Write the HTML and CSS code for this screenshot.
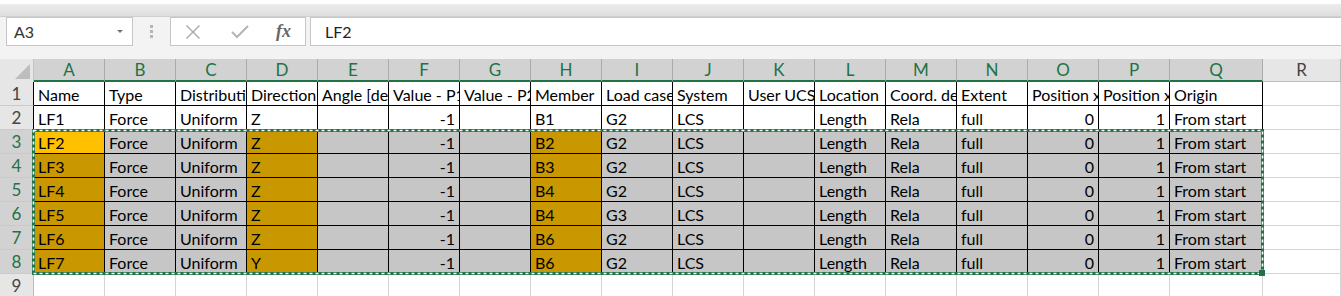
FILE: index.html
```html
<!DOCTYPE html>
<html>
  <head>
    <title>Load table</title>
    <link rel="stylesheet" href="styles.css">
  </head>
  <body>
    <div class="top-strip"></div>
    <div class="ribbon-edge"></div>

    <div class="formula-bar">
      <div class="name-box">
        <span>A3</span>
        <span class="caret"></span>
      </div>
      <div class="grip"><span></span><span></span><span></span></div>
      <div class="fx-buttons">
        <svg width="16" height="16" viewBox="0 0 16 16">
          <path d="M1.5 1.5 L14.5 14.5 M14.5 1.5 L1.5 14.5" stroke="#a8a8a8" stroke-width="1.4" fill="none"/>
        </svg>
        <svg width="18" height="14" viewBox="0 0 18 14">
          <path d="M1 7 L6 12 L17 1" stroke="#b4b4b4" stroke-width="2" fill="none"/>
        </svg>
        <span class="fx">fx</span>
      </div>
      <div class="formula-input">LF2</div>
    </div>

    <div class="sheet">
      <div class="row head">
        <div class="corner"><span class="tri"></span></div>
        <div class="col sel">A</div>
        <div class="col sel">B</div>
        <div class="col sel">C</div>
        <div class="col sel">D</div>
        <div class="col sel">E</div>
        <div class="col sel">F</div>
        <div class="col sel">G</div>
        <div class="col sel">H</div>
        <div class="col sel">I</div>
        <div class="col sel">J</div>
        <div class="col sel">K</div>
        <div class="col sel">L</div>
        <div class="col sel">M</div>
        <div class="col sel">N</div>
        <div class="col sel">O</div>
        <div class="col sel">P</div>
        <div class="col sel">Q</div>
        <div class="col">R</div>
      </div>

      <div class="row">
        <div class="rh data">1</div>
        <div class="c d">Name</div>
        <div class="c d">Type</div>
        <div class="c d">Distribution</div>
        <div class="c d">Direction</div>
        <div class="c d">Angle [deg]</div>
        <div class="c d">Value - P1</div>
        <div class="c d">Value - P2</div>
        <div class="c d">Member</div>
        <div class="c d">Load case</div>
        <div class="c d">System</div>
        <div class="c d">User UCS</div>
        <div class="c d">Location</div>
        <div class="c d">Coord. definition</div>
        <div class="c d">Extent</div>
        <div class="c d">Position x1</div>
        <div class="c d">Position x2</div>
        <div class="c d">Origin</div>
        <div class="c"></div>
      </div>

      <div class="row">
        <div class="rh data">2</div>
        <div class="c d">LF1</div>
        <div class="c d">Force</div>
        <div class="c d">Uniform</div>
        <div class="c d">Z</div>
        <div class="c d"></div>
        <div class="c d num">-1</div>
        <div class="c d"></div>
        <div class="c d">B1</div>
        <div class="c d">G2</div>
        <div class="c d">LCS</div>
        <div class="c d"></div>
        <div class="c d">Length</div>
        <div class="c d">Rela</div>
        <div class="c d">full</div>
        <div class="c d num">0</div>
        <div class="c d num">1</div>
        <div class="c d">From start</div>
        <div class="c"></div>
      </div>

      <div class="row">
        <div class="rh data picked">3</div>
        <div class="c d active">LF2</div>
        <div class="c d gray">Force</div>
        <div class="c d gray">Uniform</div>
        <div class="c d amber">Z</div>
        <div class="c d gray"></div>
        <div class="c d gray num">-1</div>
        <div class="c d gray"></div>
        <div class="c d amber">B2</div>
        <div class="c d gray">G2</div>
        <div class="c d gray">LCS</div>
        <div class="c d gray"></div>
        <div class="c d gray">Length</div>
        <div class="c d gray">Rela</div>
        <div class="c d gray">full</div>
        <div class="c d gray num">0</div>
        <div class="c d gray num">1</div>
        <div class="c d gray">From start</div>
        <div class="c"></div>
      </div>

      <div class="row">
        <div class="rh data picked">4</div>
        <div class="c d amber">LF3</div>
        <div class="c d gray">Force</div>
        <div class="c d gray">Uniform</div>
        <div class="c d amber">Z</div>
        <div class="c d gray"></div>
        <div class="c d gray num">-1</div>
        <div class="c d gray"></div>
        <div class="c d amber">B3</div>
        <div class="c d gray">G2</div>
        <div class="c d gray">LCS</div>
        <div class="c d gray"></div>
        <div class="c d gray">Length</div>
        <div class="c d gray">Rela</div>
        <div class="c d gray">full</div>
        <div class="c d gray num">0</div>
        <div class="c d gray num">1</div>
        <div class="c d gray">From start</div>
        <div class="c"></div>
      </div>

      <div class="row">
        <div class="rh data picked">5</div>
        <div class="c d amber">LF4</div>
        <div class="c d gray">Force</div>
        <div class="c d gray">Uniform</div>
        <div class="c d amber">Z</div>
        <div class="c d gray"></div>
        <div class="c d gray num">-1</div>
        <div class="c d gray"></div>
        <div class="c d amber">B4</div>
        <div class="c d gray">G2</div>
        <div class="c d gray">LCS</div>
        <div class="c d gray"></div>
        <div class="c d gray">Length</div>
        <div class="c d gray">Rela</div>
        <div class="c d gray">full</div>
        <div class="c d gray num">0</div>
        <div class="c d gray num">1</div>
        <div class="c d gray">From start</div>
        <div class="c"></div>
      </div>

      <div class="row">
        <div class="rh data picked">6</div>
        <div class="c d amber">LF5</div>
        <div class="c d gray">Force</div>
        <div class="c d gray">Uniform</div>
        <div class="c d amber">Z</div>
        <div class="c d gray"></div>
        <div class="c d gray num">-1</div>
        <div class="c d gray"></div>
        <div class="c d amber">B4</div>
        <div class="c d gray">G3</div>
        <div class="c d gray">LCS</div>
        <div class="c d gray"></div>
        <div class="c d gray">Length</div>
        <div class="c d gray">Rela</div>
        <div class="c d gray">full</div>
        <div class="c d gray num">0</div>
        <div class="c d gray num">1</div>
        <div class="c d gray">From start</div>
        <div class="c"></div>
      </div>

      <div class="row">
        <div class="rh data picked">7</div>
        <div class="c d amber">LF6</div>
        <div class="c d gray">Force</div>
        <div class="c d gray">Uniform</div>
        <div class="c d amber">Z</div>
        <div class="c d gray"></div>
        <div class="c d gray num">-1</div>
        <div class="c d gray"></div>
        <div class="c d amber">B6</div>
        <div class="c d gray">G2</div>
        <div class="c d gray">LCS</div>
        <div class="c d gray"></div>
        <div class="c d gray">Length</div>
        <div class="c d gray">Rela</div>
        <div class="c d gray">full</div>
        <div class="c d gray num">0</div>
        <div class="c d gray num">1</div>
        <div class="c d gray">From start</div>
        <div class="c"></div>
      </div>

      <div class="row">
        <div class="rh data picked">8</div>
        <div class="c d amber">LF7</div>
        <div class="c d gray">Force</div>
        <div class="c d gray">Uniform</div>
        <div class="c d amber">Y</div>
        <div class="c d gray"></div>
        <div class="c d gray num">-1</div>
        <div class="c d gray"></div>
        <div class="c d amber">B6</div>
        <div class="c d gray">G2</div>
        <div class="c d gray">LCS</div>
        <div class="c d gray"></div>
        <div class="c d gray">Length</div>
        <div class="c d gray">Rela</div>
        <div class="c d gray">full</div>
        <div class="c d gray num">0</div>
        <div class="c d gray num">1</div>
        <div class="c d gray">From start</div>
        <div class="c"></div>
      </div>

      <div class="row">
        <div class="rh">9</div>
        <div class="c"></div><div class="c"></div><div class="c"></div>
        <div class="c"></div><div class="c"></div><div class="c"></div>
        <div class="c"></div><div class="c"></div><div class="c"></div>
        <div class="c"></div><div class="c"></div><div class="c"></div>
        <div class="c"></div><div class="c"></div><div class="c"></div>
        <div class="c"></div><div class="c"></div><div class="c"></div>
      </div>

      <!-- copy marquee round A3:Q8 -->
      <svg class="ants" width="1240" height="152">
        <rect x="1.5" y="1.5" width="1229" height="143" fill="none" stroke="#217346" stroke-width="3"/>
        <rect x="1.5" y="1.5" width="1229" height="143" fill="none" stroke="#fff" stroke-width="1.6" stroke-dasharray="3 3"/>
        <rect x="1227" y="141" width="6" height="6" fill="#217346"/>
      </svg>
    </div>
  </body>
</html>
```

FILE: styles.css
```css
body {
  margin: 0;
  background: #fff;
  font-family: Lato, "Liberation Sans", sans-serif;
  overflow: hidden;
}

.top-strip {
  height: 4px;
  background: #fff;
}

.ribbon-edge {
  height: 12px;
  background: linear-gradient(#ececec, #dedede);
  border-bottom: 1px solid #cfcfcf;
}

.formula-bar {
  display: flex;
  align-items: flex-start;
  height: 42px;
  background: #f3f3f3;
}

.name-box {
  box-sizing: border-box;
  display: flex;
  align-items: center;
  justify-content: space-between;
  width: 127px;
  height: 29px;
  margin-left: 6px;
  padding: 0 9px 0 7px;
  background: #fff;
  border: 1px solid #c6c6c6;
  font-size: 16px;
  color: #333;
}

.caret {
  width: 0;
  height: 0;
  border-left: 3px solid transparent;
  border-right: 3px solid transparent;
  border-top: 3px solid #777;
}

.grip {
  display: flex;
  flex-direction: column;
  align-items: center;
  gap: 2px;
  width: 37px;
  padding-top: 8px;
}

.grip span {
  width: 3px;
  height: 3px;
  background: #b5b5b5;
}

.fx-buttons {
  box-sizing: border-box;
  display: flex;
  align-items: center;
  width: 136px;
  height: 29px;
  padding-left: 14px;
  background: #fff;
  border: 1px solid #c6c6c6;
}

.fx-buttons svg:nth-child(2) {
  margin-left: 30px;
}

.fx {
  margin-left: 27px;
  font-family: "Liberation Serif", serif;
  font-style: italic;
  font-weight: bold;
  font-size: 18px;
  color: #666;
}

.formula-input {
  box-sizing: border-box;
  flex: 1;
  height: 29px;
  margin-left: 4px;
  margin-right: -2px;
  padding-left: 14px;
  background: #fff;
  border: 1px solid #c6c6c6;
  font-size: 16px;
  line-height: 27px;
  color: #222;
}

.sheet {
  position: relative;
}

.row {
  display: grid;
  grid-template-columns: 34px repeat(16, 71px) 93px 1fr;
  height: 24px;
}

.row.head {
  height: 23px;
}

.corner {
  position: relative;
  background: #e6e6e6;
  border-right: 1px solid #c4c4c4;
}

.tri {
  position: absolute;
  right: 3px;
  bottom: 3px;
  width: 0;
  height: 0;
  border-left: 15px solid transparent;
  border-bottom: 15px solid #bdbdbd;
}

.col {
  box-sizing: border-box;
  text-align: center;
  font-size: 17px;
  line-height: 22px;
  color: #444;
  background: #e6e6e6;
  border-right: 1px solid #bcbcbc;
  border-bottom: 1px solid #bcbcbc;
}

.col.sel {
  background: #d2d2d2;
  color: #217346;
  border-right-color: #ababab;
  border-bottom: 2px solid #217346;
  line-height: 21px;
}

.rh {
  box-sizing: border-box;
  text-align: center;
  font-size: 17px;
  line-height: 23px;
  color: #444;
  background: #e6e6e6;
  border-right: 1px solid #bcbcbc;
  border-bottom: 1px solid #cacaca;
}

.rh.data {
  border-right-color: #000;
}

.rh.picked {
  background: #d2d2d2;
  color: #217346;
}

.c {
  box-sizing: border-box;
  overflow: hidden;
  white-space: nowrap;
  padding-left: 4px;
  font-size: 16px;
  line-height: 25px;
  color: #000;
  border-right: 1px solid #d4d4d4;
  border-bottom: 1px solid #d4d4d4;
}

.c.d {
  border-right-color: #000;
  border-bottom-color: #000;
}

.c.num {
  text-align: right;
  padding-left: 0;
  padding-right: 4px;
}

.gray {
  background: #c6c6c6;
}

.amber {
  background: #c99700;
}

.active {
  background: #ffc000;
}

.ants {
  position: absolute;
  left: 32px;
  top: 70px;
  overflow: visible;
}
```
